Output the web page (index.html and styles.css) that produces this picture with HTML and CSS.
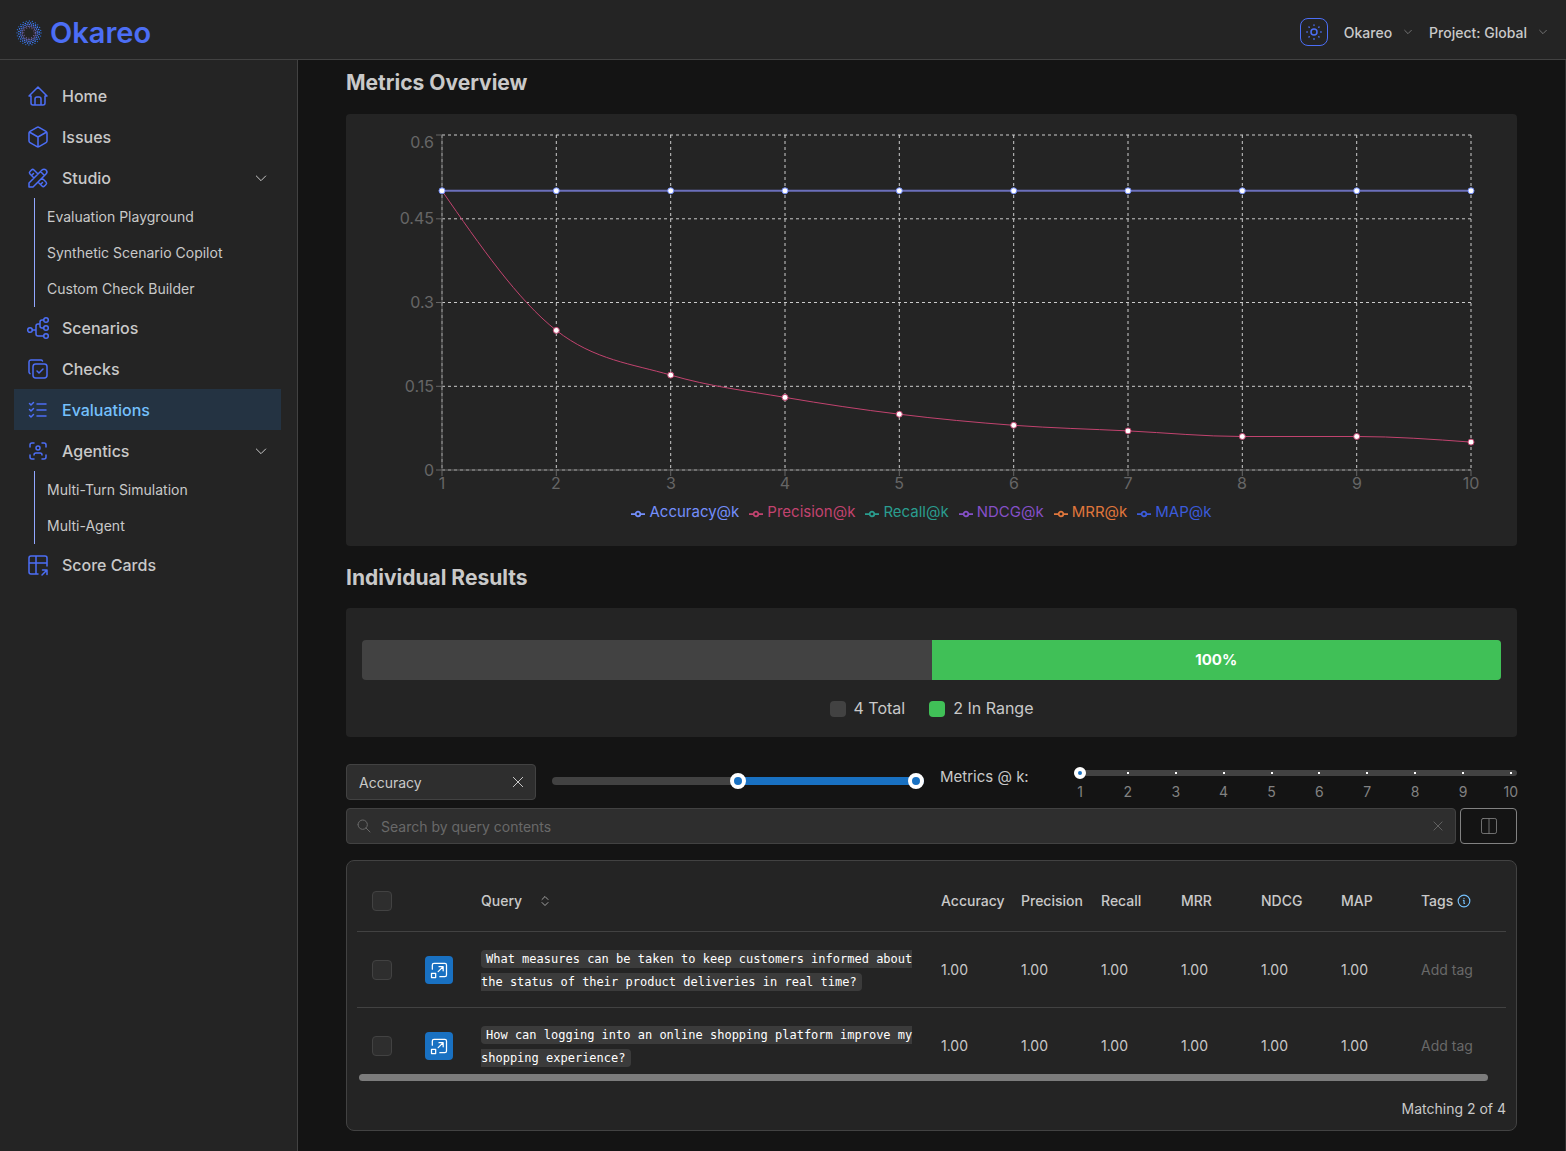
FILE: index.html
```html
<!DOCTYPE html>
<html lang="en">
<head>
    <meta charset="UTF-8">
    <meta name="viewport" content="width=device-width, initial-scale=1.0">
    <title>Okareo - Evaluations</title>
    <link rel="stylesheet" href="styles.css">
</head>
<body>
    <header class="header">
        <a class="logo" href="#">
            <svg class="logo-mark" viewBox="0 0 26 26" aria-hidden="true">
                <circle cx="13" cy="13" r="12" stroke="#2f6fd8" stroke-width="1.3" stroke-dasharray="0 3.14"/>
                <circle cx="13" cy="13" r="10.2" stroke="#3f80ff" stroke-width="1.6" stroke-dasharray="0 2.67" stroke-dashoffset="1.3"/>
                <circle cx="13" cy="13" r="8.4" stroke="#4c7bff" stroke-width="1.5" stroke-dasharray="0 2.2"/>
                <circle cx="13" cy="13" r="6.7" stroke="#7a78dd" stroke-width="1.2" stroke-dasharray="0 1.75" stroke-dashoffset="0.9"/>
                <circle cx="13" cy="13" r="5.2" stroke="#8f70b8" stroke-width="0.9" stroke-dasharray="0 2.7"/>
            </svg>
            <span>Okareo</span>
        </a>
        <div class="header-right">
            <button class="theme-button" aria-label="Toggle theme">
                <svg class="icon" viewBox="0 0 24 24"><path d="M8 12a4 4 0 1 0 8 0a4 4 0 1 0 -8 0M2.5 12h.5m9 -9.5v.5m9 9h.5m-9.500 9v.5m-6.700 -16.200l.3 .3m13.100 -.3l-.3 .3m0 12.800l.3 .3m-13.100 -.3l-.3 .3"/></svg>
            </button>
            <button class="header-menu">Okareo
                <svg class="icon" viewBox="0 0 24 24"><path d="M4 8l8 8l8 -8"/></svg>
            </button>
            <button class="header-menu">Project: Global
                <svg class="icon" viewBox="0 0 24 24"><path d="M4 8l8 8l8 -8"/></svg>
            </button>
        </div>
    </header>

    <div class="layout">
        <nav class="sidebar">
            <a class="nav-link" href="#">
                <svg class="icon" viewBox="0 0 24 24"><path d="M5 12h-2l9 -9l9 9h-2M5 12v7a2 2 0 0 0 2 2h10a2 2 0 0 0 2 -2v-7M9 21v-6a2 2 0 0 1 2 -2h2a2 2 0 0 1 2 2v6"/></svg>
                Home
            </a>
            <a class="nav-link" href="#">
                <svg class="icon" viewBox="0 0 24 24"><path d="M21 16v-8a2 2 0 0 0 -1 -1.7l-7 -4a2 2 0 0 0 -2 0l-7 4a2 2 0 0 0 -1 1.7v8a2 2 0 0 0 1 1.7l7 4a2 2 0 0 0 2 0l7 -4a2 2 0 0 0 1 -1.7zM12 22v-10l8.7 -5M3.3 7l8.7 5"/></svg>
                Issues
            </a>
            <a class="nav-link" href="#">
                <svg class="icon" viewBox="0 0 24 24"><path d="M3 21h4l13 -13a2.8 2.8 0 0 0 -4 -4l-13 13v4M14.5 5.500l4 4M12 8l-4 -4a1.8 1.8 0 0 0 -2.5 0l-1.5 1.5a1.8 1.8 0 0 0 0 2.5l4 4M7.5 7.5l-1.5 1.5M16 12l4 4a1.8 1.8 0 0 1 0 2.5l-1.5 1.5a1.8 1.8 0 0 1 -2.5 0l-4 -4M16.5 16.5l-1.5 1.5"/></svg>
                Studio
                <svg class="icon chevron" viewBox="0 0 24 24"><path d="M5 9l7 7l7 -7"/></svg>
            </a>
            <div class="nav-group">
                <a href="#">Evaluation Playground</a>
                <a href="#">Synthetic Scenario Copilot</a>
                <a href="#">Custom Check Builder</a>
            </div>
            <a class="nav-link" href="#">
                <svg class="icon" viewBox="0 0 24 24"><circle cx="4" cy="14" r="2.3"/><circle cx="20" cy="4" r="2.3"/><circle cx="20" cy="12" r="2.3"/><circle cx="20" cy="20" r="2.3"/><path d="M6.3 14h3.7M17.7 20h-5.7a2 2 0 0 1 -2 -2v-8a2 2 0 0 1 2 -2h2M17.7 4h-1.7a2 2 0 0 0 -2 2v4a2 2 0 0 0 2 2h1.7"/></svg>
                Scenarios
            </a>
            <a class="nav-link" href="#">
                <svg class="icon" viewBox="0 0 24 24"><rect x="7" y="7" width="14" height="14" rx="2.7"/><path d="M4 16.7a2 2 0 0 1 -1 -1.7v-10a2 2 0 0 1 2 -2h10c.7 0 1.2 .4 1.5 1M11 14l2 2l4 -4"/></svg>
                Checks
            </a>
            <a class="nav-link active" href="#">
                <svg class="icon" viewBox="0 0 24 24"><path d="M3.5 5.5l1.5 1.5l2.5 -2.5M3.5 11.5l1.5 1.5l2.5 -2.5M3.5 17.5l1.5 1.5l2.5 -2.5M11 6h9M11 12h9M11 18h9"/></svg>
                Evaluations
            </a>
            <a class="nav-link" href="#">
                <svg class="icon" viewBox="0 0 24 24"><path d="M10 9a2 2 0 1 0 4 0a2 2 0 0 0 -4 0M4 8v-2a2 2 0 0 1 2 -2h2M4 16v2a2 2 0 0 0 2 2h2M16 4h2a2 2 0 0 1 2 2v2M16 20h2a2 2 0 0 0 2 -2v-2M8 16a2 2 0 0 1 2 -2h4a2 2 0 0 1 2 2"/></svg>
                Agentics
                <svg class="icon chevron" viewBox="0 0 24 24"><path d="M5 9l7 7l7 -7"/></svg>
            </a>
            <div class="nav-group">
                <a href="#">Multi-Turn Simulation</a>
                <a href="#">Multi-Agent</a>
            </div>
            <a class="nav-link" href="#">
                <svg class="icon" viewBox="0 0 24 24"><path d="M12 21h-7a2 2 0 0 1 -2 -2v-14a2 2 0 0 1 2 -2h14a2 2 0 0 1 2 2v8M3 10h18M10 3v18M16 22l5 -5M21 21.5v-4.5h-4.5"/></svg>
                Score Cards
            </a>
        </nav>

        <main class="main">
            <h2 class="section-title">Metrics Overview</h2>
            <section class="card chart-card">
                <svg class="chart" viewBox="0 0 1171 384" role="img" aria-label="Metrics at k">
                    <g class="grid-lines">
                        <path d="M96 21H1125"/>
                        <path d="M96 104.8H1125"/>
                        <path d="M96 188.5H1125"/>
                        <path d="M96 272.3H1125"/>
                        <path d="M96 356H1125"/>
                        <path d="M96 21V356"/>
                        <path d="M210.3 21V356"/>
                        <path d="M324.7 21V356"/>
                        <path d="M439 21V356"/>
                        <path d="M553.3 21V356"/>
                        <path d="M667.7 21V356"/>
                        <path d="M782 21V356"/>
                        <path d="M896.3 21V356"/>
                        <path d="M1010.7 21V356"/>
                        <path d="M1125 21V356"/>
                    </g>
                    <g class="axis">
                        <path d="M96 21V356M90 356H1125"/>
                        <path d="M90 21h6M90 104.8h6M90 188.5h6M90 272.3h6"/>
                        <path d="M96 356v6M210.3 356v6M324.7 356v6M439 356v6M553.3 356v6M667.7 356v6M782 356v6M896.3 356v6M1010.7 356v6M1125 356v6"/>
                    </g>
                    <g class="y-labels">
                        <text x="88" y="34">0.6</text>
                        <text x="88" y="110">0.45</text>
                        <text x="88" y="194">0.3</text>
                        <text x="88" y="278">0.15</text>
                        <text x="88" y="362">0</text>
                    </g>
                    <g class="x-labels">
                        <text x="96" y="375">1</text>
                        <text x="210" y="375">2</text>
                        <text x="325" y="375">3</text>
                        <text x="439" y="375">4</text>
                        <text x="553" y="375">5</text>
                        <text x="668" y="375">6</text>
                        <text x="782" y="375">7</text>
                        <text x="896" y="375">8</text>
                        <text x="1011" y="375">9</text>
                        <text x="1125" y="375">10</text>
                    </g>
                    <path class="line precision" d="M96 76.8C134.1 131.7 172.2 186.6 210.3 216.4C248.4 246.2 286.6 249.9 324.7 261.1C362.8 272.3 400.9 276.9 439 283.4C477.1 289.9 515.2 295.6 553.3 300.2C591.4 304.9 629.6 308.5 667.7 311.3C705.8 314.1 743.9 315 782 316.9C820.1 318.8 858.2 322.5 896.3 322.5L1010.7 322.5C1048.8 322.5 1086.9 325.3 1125 328.1"/>
                    <g class="dots precision">
                        <circle cx="210.3" cy="216.4" r="3"/>
                        <circle cx="324.7" cy="261.1" r="3"/>
                        <circle cx="439" cy="283.4" r="3"/>
                        <circle cx="553.3" cy="300.2" r="3"/>
                        <circle cx="667.7" cy="311.3" r="3"/>
                        <circle cx="782" cy="316.9" r="3"/>
                        <circle cx="896.3" cy="322.5" r="3"/>
                        <circle cx="1010.7" cy="322.5" r="3"/>
                        <circle cx="1125" cy="328.1" r="3"/>
                    </g>
                    <path class="line accuracy" d="M96 76.8H1125"/>
                    <g class="dots accuracy">
                        <circle cx="96" cy="76.8" r="3"/>
                        <circle cx="210.3" cy="76.8" r="3"/>
                        <circle cx="324.7" cy="76.8" r="3"/>
                        <circle cx="439" cy="76.8" r="3"/>
                        <circle cx="553.3" cy="76.8" r="3"/>
                        <circle cx="667.7" cy="76.8" r="3"/>
                        <circle cx="782" cy="76.8" r="3"/>
                        <circle cx="896.3" cy="76.8" r="3"/>
                        <circle cx="1010.7" cy="76.8" r="3"/>
                        <circle cx="1125" cy="76.8" r="3"/>
                    </g>
                </svg>
                <ul class="chart-legend">
                    <li class="accuracy"><svg viewBox="0 0 32 32"><path d="M0 16h10.7a5.3 5.3 0 1 1 10.6 0H32M21.3 16a5.3 5.3 0 1 1 -10.6 0"/></svg>Accuracy@k</li>
                    <li class="precision"><svg viewBox="0 0 32 32"><path d="M0 16h10.7a5.3 5.3 0 1 1 10.6 0H32M21.3 16a5.3 5.3 0 1 1 -10.6 0"/></svg>Precision@k</li>
                    <li class="recall"><svg viewBox="0 0 32 32"><path d="M0 16h10.7a5.3 5.3 0 1 1 10.6 0H32M21.3 16a5.3 5.3 0 1 1 -10.6 0"/></svg>Recall@k</li>
                    <li class="ndcg"><svg viewBox="0 0 32 32"><path d="M0 16h10.7a5.3 5.3 0 1 1 10.6 0H32M21.3 16a5.3 5.3 0 1 1 -10.6 0"/></svg>NDCG@k</li>
                    <li class="mrr"><svg viewBox="0 0 32 32"><path d="M0 16h10.7a5.3 5.3 0 1 1 10.6 0H32M21.3 16a5.3 5.3 0 1 1 -10.6 0"/></svg>MRR@k</li>
                    <li class="map"><svg viewBox="0 0 32 32"><path d="M0 16h10.7a5.3 5.3 0 1 1 10.6 0H32M21.3 16a5.3 5.3 0 1 1 -10.6 0"/></svg>MAP@k</li>
                </ul>
            </section>

            <h2 class="section-title">Individual Results</h2>
            <section class="card results-card">
                <div class="progress">
                    <div class="progress-total" style="width: 50%;"></div>
                    <div class="progress-range" style="width: 50%;">100%</div>
                </div>
                <div class="progress-legend">
                    <span><i class="swatch"></i>4 Total</span>
                    <span><i class="swatch green"></i>2 In Range</span>
                </div>
            </section>

            <div class="filters">
                <div class="metric-select">
                    <select aria-label="Metric">
                        <option>Accuracy</option>
                        <option>Precision</option>
                        <option>Recall</option>
                    </select>
                    <button class="clear-button" aria-label="Clear metric">
                        <svg class="icon" viewBox="0 0 24 24"><path d="M5 5l14 14M19 5l-14 14"/></svg>
                    </button>
                </div>
                <div class="range-slider">
                    <div class="range-fill" style="left: 50%; right: 0;"></div>
                    <input type="range" min="0" max="1" step="0.1" value="0.5" aria-label="Minimum">
                    <input type="range" min="0" max="1" step="0.1" value="1" aria-label="Maximum">
                </div>
                <label class="k-label" for="k">Metrics @ k:</label>
                <div class="k-slider">
                    <input type="range" id="k" min="1" max="10" value="1">
                    <div class="k-marks">
                        <span>1</span><span>2</span><span>3</span><span>4</span><span>5</span><span>6</span><span>7</span><span>8</span><span>9</span><span>10</span>
                    </div>
                </div>
            </div>

            <div class="search-row">
                <div class="search-box">
                    <svg class="icon" viewBox="0 0 24 24"><path d="M3 10a7 7 0 1 0 14 0a7 7 0 1 0 -14 0M21 21l-6 -6"/></svg>
                    <input type="text" placeholder="Search by query contents" aria-label="Search by query contents">
                    <button class="search-clear" aria-label="Clear search">
                        <svg class="icon" viewBox="0 0 24 24"><path d="M5 5l14 14M19 5l-14 14"/></svg>
                    </button>
                </div>
                <button class="columns-button" aria-label="Columns">
                    <svg class="icon" viewBox="0 0 24 24"><path d="M5 3h14a2 2 0 0 1 2 2v14a2 2 0 0 1 -2 2h-14a2 2 0 0 1 -2 -2v-14a2 2 0 0 1 2 -2zM12 3v18"/></svg>
                </button>
            </div>

            <section class="table-card">
                <div class="table-scroll">
                    <table>
                        <thead>
                            <tr>
                                <th class="col-check"><input type="checkbox" aria-label="Select all"></th>
                                <th class="col-open"></th>
                                <th><span class="sortable">Query
                                    <svg class="icon" viewBox="0 0 24 24"><path d="M6 9l6 -6l6 6M6 15l6 6l6 -6"/></svg></span>
                                </th>
                                <th class="col-metric">Accuracy</th>
                                <th class="col-metric">Precision</th>
                                <th class="col-metric">Recall</th>
                                <th class="col-metric">MRR</th>
                                <th class="col-metric">NDCG</th>
                                <th class="col-metric">MAP</th>
                                <th class="col-tags"><span class="tags-title">Tags
                                    <svg class="icon" viewBox="0 0 24 24"><path d="M2 12a10 10 0 1 0 20 0a10 10 0 1 0 -20 0M12 7.5v.1M11 11h1v5h1"/></svg></span>
                                </th>
                            </tr>
                        </thead>
                        <tbody>
                            <tr>
                                <td class="col-check"><input type="checkbox" aria-label="Select row 1"></td>
                                <td><button class="open-button" aria-label="Open row 1">
                                    <svg class="icon" viewBox="0 0 24 24"><path d="M4 11v-5a2 2 0 0 1 2 -2h13a2 2 0 0 1 2 2v12a2 2 0 0 1 -2 2h-6M12 8h5v5M17 8l-6 6M3 16h5v5h-5z"/></svg>
                                </button></td>
                                <td><code>What measures can be taken to keep customers informed about the status of their product deliveries in real time?</code></td>
                                <td>1.00</td>
                                <td>1.00</td>
                                <td>1.00</td>
                                <td>1.00</td>
                                <td>1.00</td>
                                <td>1.00</td>
                                <td><input class="tag-input" type="text" placeholder="Add tag" aria-label="Add tag"></td>
                            </tr>
                            <tr>
                                <td class="col-check"><input type="checkbox" aria-label="Select row 2"></td>
                                <td><button class="open-button" aria-label="Open row 2">
                                    <svg class="icon" viewBox="0 0 24 24"><path d="M4 11v-5a2 2 0 0 1 2 -2h13a2 2 0 0 1 2 2v12a2 2 0 0 1 -2 2h-6M12 8h5v5M17 8l-6 6M3 16h5v5h-5z"/></svg>
                                </button></td>
                                <td><code>How can logging into an online shopping platform improve my shopping experience?</code></td>
                                <td>1.00</td>
                                <td>1.00</td>
                                <td>1.00</td>
                                <td>1.00</td>
                                <td>1.00</td>
                                <td>1.00</td>
                                <td><input class="tag-input" type="text" placeholder="Add tag" aria-label="Add tag"></td>
                            </tr>
                        </tbody>
                    </table>
                    <div class="scroll-thumb"></div>
                </div>
                <div class="table-footer">Matching 2 of 4</div>
            </section>
        </main>
    </div>
</body>
</html>
```
FILE: styles.css
```css
* {
    box-sizing: border-box;
}
body {
    font-family: Inter, "Liberation Sans", sans-serif;
    font-size: 14px;
    line-height: 22px;
    margin: 0;
    background-color: #141414;
    color: #c9c9c9;
    min-height: 100vh;
    display: flex;
    flex-direction: column;
}
a {
    color: inherit;
    text-decoration: none;
}
button, input, select {
    font-family: inherit;
    font-size: 14px;
    color: inherit;
    margin: 0;
}
button {
    background: none;
    border: none;
    padding: 0;
    cursor: pointer;
    display: flex;
    align-items: center;
    justify-content: center;
}
.icon {
    fill: none;
    stroke: currentColor;
    stroke-width: 1.5;
    stroke-linecap: round;
    stroke-linejoin: round;
    flex-shrink: 0;
}

/* Header */
.header {
    height: 60px;
    padding: 0 18px 0 16px;
    background-color: #242424;
    border-bottom: 1px solid #424242;
    display: flex;
    justify-content: space-between;
    align-items: center;
}
.logo {
    display: flex;
    align-items: center;
    gap: 8px;
    padding-top: 6px;
    font-size: 29px;
    font-weight: 600;
    line-height: 32px;
    color: #4c6ef5;
}
.logo-mark {
    width: 26px;
    height: 26px;
    fill: none;
    stroke-linecap: round;
}
.header-right {
    display: flex;
    align-items: center;
    gap: 16px;
    padding-top: 5px;
}
.theme-button {
    width: 28px;
    height: 28px;
    border: 1px solid #4c6ef5;
    border-radius: 8px;
    color: #4c6ef5;
}
.theme-button .icon {
    width: 18px;
    height: 18px;
    stroke-width: 2;
}
.header-menu {
    font-weight: 500;
    gap: 11px;
}
.header-menu .icon {
    width: 10px;
    height: 10px;
    color: #828282;
    stroke-width: 2;
}

/* Sidebar */
.layout {
    display: flex;
    flex: 1;
}
.sidebar {
    width: 298px;
    flex-shrink: 0;
    padding: 15px 16px 16px 14px;
    background-color: #242424;
    border-right: 1px solid #424242;
}
.nav-link {
    height: 41px;
    padding: 0 12px;
    display: flex;
    align-items: center;
    gap: 12px;
    font-size: 16px;
    font-weight: 500;
}
.nav-link .icon {
    width: 24px;
    height: 24px;
    color: #4c6ef5;
}
.nav-link .chevron {
    width: 16px;
    height: 16px;
    margin-left: auto;
    color: #c9c9c9;
}
.nav-link.active {
    background-color: #243342;
    color: #74c0fc;
}
.nav-group {
    margin-left: 20px;
    padding-top: 1px;
    border-left: 1px solid #91a7ff;
}
.nav-group a {
    display: block;
    padding: 7px 12px;
}

/* Main */
.main {
    flex: 1;
    min-width: 0;
    padding: 8px 48px 20px;
    border-right: 1px solid #2e2e2e;
}
.section-title {
    margin: 0;
    font-size: 21px;
    font-weight: 700;
    line-height: 30px;
}
.card {
    background-color: #242424;
    border-radius: 4px;
}
.chart-card {
    margin: 16px 0 17px;
    padding-bottom: 24px;
}
.chart {
    display: block;
    width: 100%;
}
.axis {
    fill: none;
    stroke: #666;
}
.grid-lines {
    fill: none;
    stroke: #ccc;
    stroke-dasharray: 3 3;
}
.chart text {
    font-size: 16px;
    fill: #666;
}
.y-labels {
    text-anchor: end;
}
.x-labels {
    text-anchor: middle;
}
.line {
    fill: none;
    stroke: currentColor;
}
.dots {
    fill: #fff;
    stroke: currentColor;
}
.accuracy { color: #748ffc; }
.precision { color: #c2436f; }
.recall { color: #2a9d8f; }
.ndcg { color: #8650c8; }
.mrr { color: #e0773c; }
.map { color: #3b5bdb; }
.line.accuracy {
    color: #6b6fbb;
    stroke-width: 2;
}
.chart-legend {
    list-style: none;
    margin: 0;
    padding: 4px 10px 0 0;
    display: flex;
    justify-content: center;
    font-size: 15px;
    line-height: 20px;
}
.chart-legend li {
    display: flex;
    align-items: center;
    gap: 4px;
    margin-right: 10px;
}
.chart-legend svg {
    width: 14px;
    height: 14px;
    margin-top: 3px;
    fill: none;
    stroke: currentColor;
    stroke-width: 4;
}

/* Results */
.results-card {
    margin: 15px 0 27px;
    padding: 32px 16px 16px;
}
.progress {
    height: 40px;
    display: flex;
    border-radius: 4px;
    overflow: hidden;
    background-color: #424242;
}
.progress-range {
    display: flex;
    align-items: center;
    justify-content: center;
    background-color: #40c057;
    color: #fff;
    font-size: 15px;
    font-weight: 700;
}
.progress-legend {
    display: flex;
    justify-content: center;
    gap: 24px;
    margin-top: 16px;
    font-size: 16px;
    line-height: 25px;
}
.progress-legend span {
    display: flex;
    align-items: center;
    gap: 8px;
}
.swatch {
    width: 16px;
    height: 16px;
    border-radius: 4px;
    background-color: #424242;
}
.swatch.green {
    background-color: #40c057;
}

/* Filters */
.filters {
    display: grid;
    grid-template-columns: 190px 372fr 118px 443fr;
    column-gap: 16px;
    height: 36px;
    margin-bottom: 8px;
}
.metric-select {
    position: relative;
}
.metric-select select {
    appearance: none;
    width: 100%;
    height: 36px;
    padding: 0 34px 0 12px;
    background-color: #2e2e2e;
    border: 1px solid #424242;
    border-radius: 4px;
}
.clear-button {
    position: absolute;
    top: 0;
    right: 10px;
    height: 36px;
}
.clear-button .icon {
    width: 16px;
    height: 16px;
}
.range-slider {
    position: relative;
    height: 8px;
    margin-top: 13px;
    border-radius: 4px;
    background-color: #424242;
}
.range-fill {
    position: absolute;
    height: 8px;
    border-radius: 4px;
    background-color: #1971c2;
}
input[type="range"] {
    appearance: none;
    background: none;
    display: block;
    width: 100%;
}
.range-slider input {
    position: absolute;
    top: -4px;
    height: 16px;
    pointer-events: none;
}
.range-slider input::-webkit-slider-thumb {
    appearance: none;
    width: 16px;
    height: 16px;
    border: 4px solid #fff;
    border-radius: 50%;
    background-color: #1971c2;
    pointer-events: auto;
}
.k-label {
    font-size: 15px;
    line-height: 26px;
}
.k-slider {
    position: relative;
    padding-top: 3px;
}
.k-slider input {
    height: 12px;
}
.k-slider input::-webkit-slider-runnable-track {
    height: 6px;
    border-radius: 3px;
    background-color: #424242;
}
.k-slider input::-webkit-slider-thumb {
    appearance: none;
    width: 12px;
    height: 12px;
    margin-top: -3px;
    border: 4px solid #fff;
    border-radius: 50%;
    background-color: #1971c2;
}
.k-marks {
    display: flex;
    justify-content: space-between;
    padding-top: 2px;
    color: #828282;
}
.k-marks span {
    width: 12px;
    display: flex;
    justify-content: center;
    position: relative;
}
.k-marks span::before {
    content: "";
    position: absolute;
    top: -9px;
    width: 2px;
    height: 2px;
    background-color: #fff;
}
.k-marks span:first-child::before {
    display: none;
}

/* Search */
.search-row {
    display: flex;
    gap: 4px;
    margin-bottom: 16px;
}
.search-box {
    flex: 1;
    height: 36px;
    padding: 0 10px 0 9px;
    display: flex;
    align-items: center;
    gap: 9px;
    background-color: #2e2e2e;
    border: 1px solid #424242;
    border-radius: 4px;
    color: #696969;
}
.search-box .icon {
    width: 16px;
    height: 16px;
}
.search-box .search-clear .icon {
    width: 14px;
    height: 14px;
}
.search-box input {
    flex: 1;
    min-width: 0;
    padding: 0;
    background: none;
    border: none;
    color: #c9c9c9;
}
.search-box input::placeholder, .tag-input::placeholder {
    color: #696969;
}
.columns-button {
    width: 57px;
    height: 36px;
    border: 1px solid #828282;
    border-radius: 4px;
    color: #828282;
}
.columns-button .icon {
    width: 20px;
    height: 20px;
    stroke-width: 1;
}

/* Table */
.table-card {
    padding: 10px;
    background-color: #242424;
    border: 1px solid #424242;
    border-radius: 8px;
}
.table-scroll {
    position: relative;
}
table {
    width: 100%;
    table-layout: fixed;
    border-collapse: separate;
    border-spacing: 0;
}
th, td {
    padding: 0 10px;
    text-align: left;
    vertical-align: middle;
}
th {
    height: 61px;
    font-weight: 500;
    white-space: nowrap;
    border-bottom: 1px solid #424242;
}
td {
    height: 76px;
    border-bottom: 1px solid #424242;
}
tbody tr:last-child td {
    border-bottom: none;
}
.col-check {
    width: 58px;
    padding-left: 15px;
}
.col-open {
    width: 56px;
}
.col-metric {
    width: 80px;
}
.col-tags {
    width: 95px;
}
input[type="checkbox"] {
    appearance: none;
    display: block;
    width: 20px;
    height: 20px;
    background-color: #2e2e2e;
    border: 1px solid #424242;
    border-radius: 4px;
}
.sortable, .tags-title {
    display: flex;
    align-items: center;
}
.sortable {
    gap: 17px;
}
.sortable .icon {
    width: 12px;
    height: 12px;
}
.tags-title {
    gap: 4px;
}
.tags-title .icon {
    width: 14px;
    height: 14px;
    color: #74c0fc;
    stroke-width: 2;
}
.open-button {
    width: 28px;
    height: 28px;
    border-radius: 4px;
    background-color: #1971c2;
    color: #fff;
}
.open-button .icon {
    width: 20px;
    height: 20px;
}
code {
    padding: 2px 5px;
    font-family: "DejaVu Sans Mono", monospace;
    font-size: 12px;
    background-color: #3b3b3b;
    border-radius: 4px;
    color: #fff;
}
.tag-input {
    width: 100%;
    padding: 0;
    background: none;
    border: none;
}
.scroll-thumb {
    position: absolute;
    left: 2px;
    right: 18px;
    bottom: 3px;
    height: 7px;
    border-radius: 4px;
    background-color: #7c7c7c;
}
.table-footer {
    margin-top: 14px;
    text-align: right;
}
```
